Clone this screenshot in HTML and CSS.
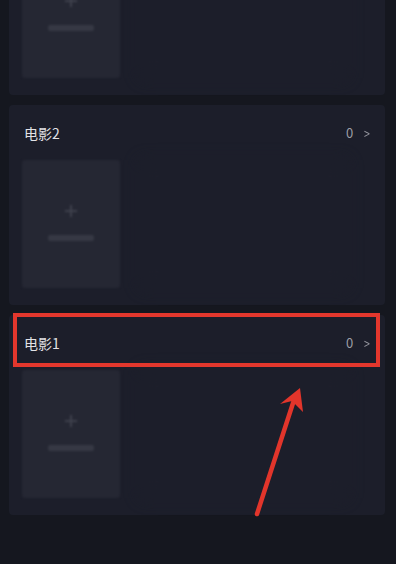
FILE: index.html
```html
<!DOCTYPE html>
<html lang="zh">
<head>
<meta charset="utf-8">
<link rel="stylesheet" href="styles.css">
</head>
<body>
<div class="screen">
  <div class="list">
    <section class="card">
      <div class="card-body"><div class="tile"><span class="plus"></span><span class="bar"></span></div><div class="ghost"></div></div>
    </section>
    <section class="card">
      <div class="card-head"><span class="title">电影2</span><span class="meta">0 <span class="chev">&gt;</span></span></div>
      <div class="card-body"><div class="tile"><span class="plus"></span><span class="bar"></span></div><div class="ghost"></div></div>
    </section>
    <section class="card">
      <div class="card-head"><span class="title">电影1</span><span class="meta">0 <span class="chev">&gt;</span></span></div>
      <div class="card-body"><div class="tile"><span class="plus"></span><span class="bar"></span></div><div class="ghost"></div></div>
    </section>
  </div>
  <div class="highlight"></div>
  <svg class="arrow" width="396" height="564" viewBox="0 0 396 564">
    <line x1="257" y1="514" x2="294" y2="400" stroke="#e2352b" stroke-width="4.5" stroke-linecap="round"/>
    <polygon points="300,388 280,404 292,401 303,412" fill="#e2352b"/>
  </svg>
</div>
</body>
</html>
```
FILE: styles.css
```css
html, body {
  margin: 0;
  padding: 0;
  background: #15171f;
}
body {
  font-family: "Noto Sans CJK SC", "Noto Sans", sans-serif;
}
.screen {
  position: relative;
  width: 396px;
  height: 564px;
  overflow: hidden;
  background: #15171f;
}
.list {
  display: flex;
  flex-direction: column;
  gap: 10px;
  margin-top: -50px;
  padding: 0 11px 0 9px;
}
.card {
  background: #1c1e2a;
  border-radius: 4px;
  padding: 0 0 17px 0;
}
.card-head {
  height: 55px;
  display: flex;
  align-items: center;
  justify-content: space-between;
  padding: 0 14px 0 15px;
}
.title {
  color: #e2e2e6;
  font-size: 14px;
}
.meta {
  color: #9c9da5;
  font-size: 13px;
  display: flex;
  align-items: center;
  gap: 10px;
}
.chev {
  font-size: 14px;
  color: #9c9da5;
  display: inline-block;
  transform: scaleX(0.75);
}
.card-body {
  display: flex;
  gap: 20px;
  padding: 0 13px;
}
.tile {
  width: 98px;
  height: 128px;
  background: #252733;
  border-radius: 3px;
  display: flex;
  flex-direction: column;
  align-items: center;
  padding-top: 45px;
  box-sizing: border-box;
  filter: blur(1px);
}
.plus {
  position: relative;
  width: 12px;
  height: 12px;
}
.plus::before,
.plus::after {
  content: "";
  position: absolute;
  background: #3e404c;
}
.plus::before {
  left: 5px;
  top: 0;
  width: 2px;
  height: 12px;
}
.plus::after {
  left: 0;
  top: 5px;
  width: 12px;
  height: 2px;
}
.bar {
  margin-top: 18px;
  width: 46px;
  height: 6px;
  background: #363844;
  border-radius: 2px;
}
.ghost {
  flex: 1;
  height: 128px;
  background: #1d1f2b;
  margin-right: 25px;
  filter: blur(8px);
  opacity: 0.6;
}
.highlight {
  position: absolute;
  left: 13px;
  top: 313px;
  width: 367px;
  height: 54px;
  box-sizing: border-box;
  border: 4px solid #e3372d;
}
.arrow {
  position: absolute;
  left: 0;
  top: 0;
}
```
